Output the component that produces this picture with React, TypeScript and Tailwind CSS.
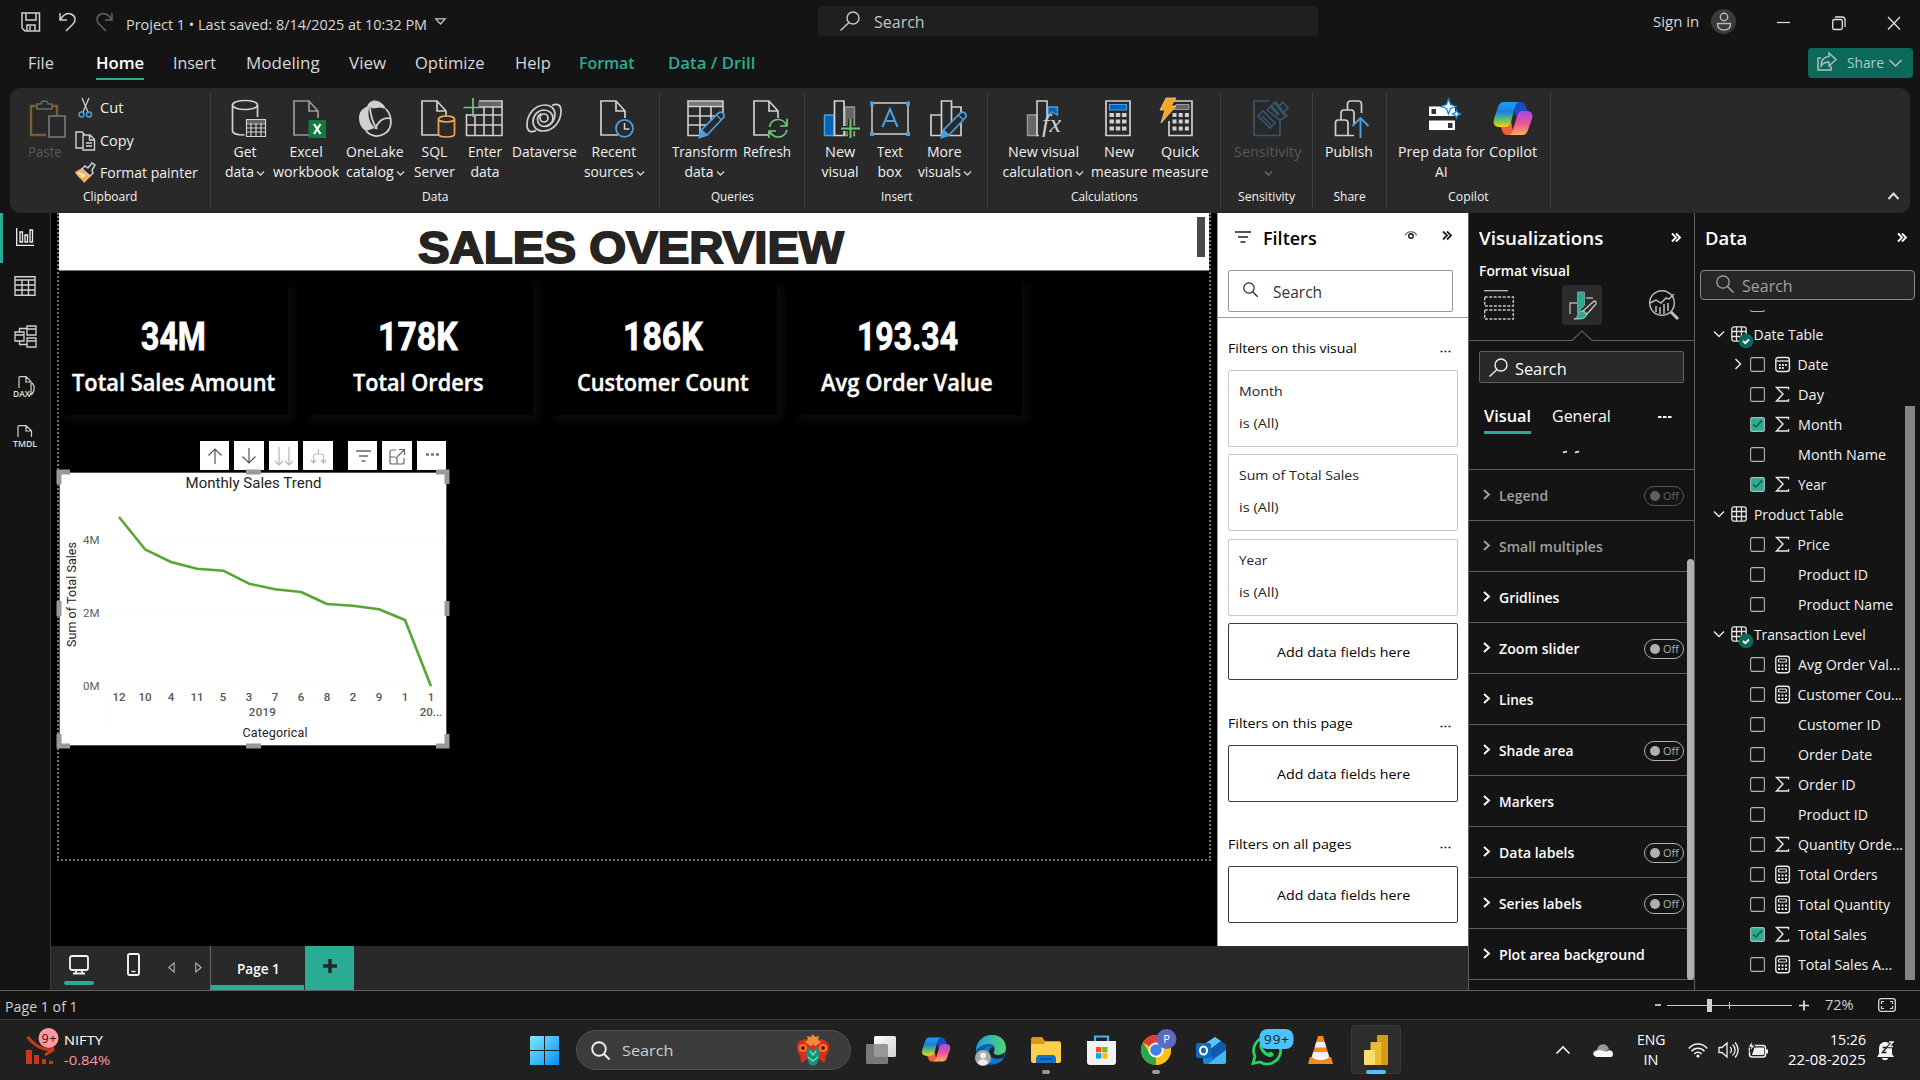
import { useLayoutEffect, useRef, useState } from "react";
import type { ReactNode } from "react";

/* Single line of text condensed or widened to a given width. */
function T({ w, c = "", children }: { w: number; c?: string; children: ReactNode }) {
  const ref = useRef<HTMLSpanElement>(null);
  const [k, setK] = useState(1);
  useLayoutEffect(() => {
    if (ref.current) setK(w / ref.current.offsetWidth);
  }, [w]);
  return (
    <span className={`block shrink-0 whitespace-nowrap ${c}`} style={{ width: w }}>
      <span ref={ref} className="inline-block origin-left" style={{ transform: `scaleX(${k})` }}>
        {children}
      </span>
    </span>
  );
}

function S({ w, h, c = "", children }: { w: number; h: number; c?: string; children: ReactNode }) {
  return (
    <svg width={w} height={h} viewBox={`0 0 ${w} ${h}`} fill="none" className={`block shrink-0 overflow-visible ${c}`}>
      {children}
    </svg>
  );
}

const G = "#d0d0d0";

const Doc = ({ x = 7, stroke = G }: { x?: number; stroke?: string }) => (
  <g transform={`translate(${x} 0)`} stroke={stroke} strokeWidth="1.7">
    <path d="M25 20V13L16 3H1v34h17" />
    <path d="M16 3v10h9" />
  </g>
);

const Pencil = ({ x }: { x: number }) => (
  <g transform={`translate(${x} 0)`}>
    <path d="M0 39.5l2-7.5L19 15c3-2.500 7 1.500 5 4.500L7.500 37z" fill="#292929" stroke="#4a9fe0" strokeWidth="1.7" />
    <path d="M2.500 32.500l5 4.500L0 39.500zM17 17l5 5" fill="#4a9fe0" stroke="#4a9fe0" strokeWidth="1.300" />
  </g>
);

const icons: Record<string, ReactNode> = {
  get: (
    <>
      <g stroke={G} strokeWidth="1.7">
        <ellipse cx="20" cy="7" rx="12.500" ry="4.500" />
        <path d="M7.500 7v26c0 2 4 4 12 4M32.500 7v12" />
        <path d="M21.500 21.500h19v17h-19zM21.500 26h19M21.500 30h19M21.500 34h19M26 25v14M31 25v14M36 25v14" fill="#292929" strokeWidth="1.200" />
      </g>
      <path d="M22 22h18v3H22z" fill="#666" />
    </>
  ),
  excel: (
    <>
      <Doc stroke="#9a9a9a" />
      <rect x="22.500" y="22" width="17.500" height="18" fill="#107c41" />
      <path d="M28 26l6.500 10M34.500 26L28 36" stroke="#fff" strokeWidth="2.200" />
    </>
  ),
  onelake: (
    <>
      <path d="M12 9C13 5 16 2.500 20 2.500S29 6 31 11l-6-1.500-7 1-3-2z" fill={G} />
      <path d="M13 8C6 11 4 15 4 20s2 10 7 13l9-3C14 25 12 16 14.500 8z" fill={G} />
      <g stroke={G} strokeWidth="1.800">
        <path d="M31 11c7 8 7 21-3 25.500S12 34 11 33M15 8c0 8 3 18 7 23M35.500 20.500c-8-2-13 4-15 10.500" />
      </g>
    </>
  ),
  sql: (
    <>
      <Doc x={6} />
      <path d="M23.500 21v15c0 4 16 4 16 0V21" fill="#292929" stroke="#f0a858" strokeWidth="1.700" />
      <ellipse cx="31.500" cy="21" rx="8" ry="3" fill="#292929" stroke="#f0a858" strokeWidth="1.700" />
    </>
  ),
  enter: (
    <>
      <path d="M13 4h24v5H13z" fill="#666" />
      <path d="M14 3h23v34.500H1.500V16M14 9h23M19 9v28M28 9v28M10 18v19M1.500 17H37M1.500 27H37" stroke={G} strokeWidth="1.600" />
      <path d="M8 0v19M-1.500 9.500h19" stroke="#6ccb77" strokeWidth="1.700" />
    </>
  ),
  dataverse: (
    <g stroke={G} strokeWidth="1.700">
      <path d="M28 7.500c6-3 9 0 9 5.500 0 11-8 20-18 20-6 0-10-4-10-9.500C9 17 14 12 20 12c5 0 9 3.500 9 8s-3.500 8.500-8.500 8.500c-4 0-7-3-7-7 0-3 2-5 4-6" />
      <path d="M12 32.500c-6 3-9 0-9-5.500C3 16 11 7 21 7c6 0 10 4 10 9.500 0 6-4 11-10 12" />
      <circle cx="20" cy="20" r="4" />
    </g>
  ),
  recent: (
    <>
      <Doc x={6} />
      <circle cx="30.500" cy="30.300" r="8.500" fill="#292929" stroke="#4a9fe0" strokeWidth="1.800" />
      <path d="M30.500 25v6h5" stroke={G} strokeWidth="1.500" />
    </>
  ),
  transform: (
    <>
      <path d="M3 3h35v5H3z" fill="#777" />
      <path d="M38 15V3H3v34.500h13M3 8.500h35M3 18h31M3 27h20M15 8.500v29M26 8.500V24" stroke={G} strokeWidth="1.600" />
      <Pencil x={14.500} />
    </>
  ),
  refresh: (
    <>
      <Doc x={6} />
      <path d="M21 21h20v19H21z" fill="#292929" />
      <path d="M22.500 29c1-5 4.500-7.500 8.500-7.500 4 0 7 2.500 8.500 6M40 20.500v7.500h-7M40 32c-1 4-4.500 7-9 7s-7-3-8.500-6M22 40v-7h7" stroke="#6ccb77" strokeWidth="1.700" />
    </>
  ),
  newvisual: (
    <>
      <path d="M4.500 17h9.500v20.500H4.500z" fill="#0364b8" stroke="#4a9fe0" strokeWidth="1.500" />
      <path d="M25 9h9.500v28.500H25z" fill="#666" stroke="#999" strokeWidth="1.300" />
      <path d="M14.500 3h9.500v34.500h-9.500z" fill="#292929" stroke={G} strokeWidth="1.700" />
      <path d="M30.500 21v19M21 30.500h19" stroke="#292929" strokeWidth="5" />
      <path d="M30.500 21v19M21 30.500h19" stroke="#6ccb77" strokeWidth="1.900" />
    </>
  ),
  textbox: (
    <>
      <path d="M2 5h36v31H2z" stroke={G} strokeWidth="1.500" />
      <path d="M0 3.500h4v4H0zM36 3.500h4v4h-4zM0 34h4v4H0zM36 34h4v4h-4z" fill="#4a9fe0" />
      <path d="M12.500 29L20 11l7.500 18M15 23h10" stroke="#4a9fe0" strokeWidth="2" />
    </>
  ),
  more: (
    <>
      <path d="M16 37.500H6V17h10M26.500 9H36v28.500H16.500V3h10v28" stroke={G} strokeWidth="1.700" />
      <Pencil x={16.500} />
    </>
  ),
  calc: (
    <>
      <path d="M4.500 17H14v20.500H4.500z" fill="#666" stroke="#999" strokeWidth="1.400" />
      <path d="M25 9h9.500v8l-6-3-3.500 6z" fill="#0364b8" stroke="#4a9fe0" strokeWidth="1.300" />
      <path d="M16 37.500h-2V3h10v15" stroke={G} strokeWidth="1.600" />
      <text x="19" y="34" fontFamily="Liberation Serif, serif" fontStyle="italic" fontSize="26" fill={G} textLength="19">fx</text>
    </>
  ),
  measure: (
    <>
      <path d="M7 3h24v34.500H7z" stroke={G} strokeWidth="1.700" />
      <path d="M10.500 6.500h17v5.500h-17z" fill="#0364b8" stroke="#4a9fe0" strokeWidth="1.200" />
      <path d="M10.500 17h17M10.500 23.500h17M10.500 30.500h17" stroke={G} strokeWidth="4.200" strokeDasharray="4.500 1.750" />
    </>
  ),
  quick: (
    <>
      <path d="M14 3h18v34.500H9V23" stroke={G} strokeWidth="1.700" />
      <path d="M16 6.500h13v5H14z" fill="#666" stroke="#999" />
      <path d="M12.500 17H29M12.500 23.500H29M12.500 30.500H29" stroke={G} strokeWidth="4.200" strokeDasharray="4 2.200" />
      <path d="M6 0h10l-5 8h5L1 25l4-13H0z" fill="#f5a623" stroke="#ffd080" strokeWidth=".8" />
    </>
  ),
  sensitivity: (
    <g stroke="#34556b" strokeWidth="1.700">
      <path d="M22 3H7v34.500h26V22M11 18l5-5 12 12-5 5z" />
      <path d="M15 18l9 9M20 12l8-8 4 4 4-4 5 6-4 4 3 4-7 4z" />
      <path d="M24 8l8 9M28 4l10 13" strokeWidth="3" />
    </g>
  ),
  publish: (
    <>
      <path d="M25 37.500H6.500V25c0-2 1-3 2.500-3h7c2 0 3 1 3 3v12.500M12 22v-7c0-2 1-3 3-3h7c2 0 3 1 3 3v12M18.500 12V6c0-2 1-3 3-3h8c2 0 3 1 3 3v9" stroke={G} strokeWidth="1.700" />
      <path d="M31.500 40V20M23.500 28l8-8 8 8" stroke="#4a9fe0" strokeWidth="1.900" />
    </>
  ),
  prep: (
    <>
      <path d="M7 8.500h26V18H7zM7 22.500h26V32H7z" fill="#fff" />
      <path d="M9.500 11h4.500v5H9.500zM26 25h4.500v5H26z" fill="#333" />
      <path d="M26.500 1l2 5.500 5.500 2-5.500 2-2 5.500-2-5.500-5.500-2 5.500-2zM34.500 12l1.300 2.700 2.700 1.300-2.700 1.300-1.300 2.700-1.300-2.700-2.700-1.300 2.700-1.300z" fill="#fff" stroke="#1689d8" strokeWidth="1.300" />
    </>
  ),
  copilot: <CopilotMark />,
};

function CopilotMark() {
  return (
    <>
      <defs>
        <linearGradient id="cpa" x1="0" y1="0" x2="0" y2="1">
          <stop offset="0" stopColor="#1ba0f0" />
          <stop offset=".4" stopColor="#1c7fe0" />
          <stop offset=".7" stopColor="#5fc06a" />
          <stop offset="1" stopColor="#f5d010" />
        </linearGradient>
        <linearGradient id="cpb" x1="0" y1="0" x2="0" y2="1">
          <stop offset="0" stopColor="#a04be8" />
          <stop offset=".5" stopColor="#ee5098" />
          <stop offset="1" stopColor="#ffae55" />
        </linearGradient>
      </defs>
      <path d="M19 4h9c3 0 4 2 5 5l2 5h-6c-3 0-5 2-6 5z" fill="#1b49c9" />
      <path d="M21 37h-7c-3 0-4-2-5-5l-2-4h5c4 0 5-2 6-5z" fill="#f0603a" />
      <path d="M11 4h16c-3 0-4 2-5 5l-4 15c-1 3-2 5-6 5H6c-5 0-6-4-5-8L5 9c1-3 3-5 6-5z" fill="url(#cpa)" />
      <path d="M29 37H15c3 0 4-2 5-5l4-14c1-3 2-5 6-5h4c5 0 6 4 5 8l-4 11c-1 3-3 5-6 5z" fill="url(#cpb)" />
    </>
  );
}

const Caret = ({ c = "#d0d0d0" }: { c?: string }) => (
  <S w={7} h={5} c="ml-[3px] mr-px mt-[3px]">
    <path d="M0 .5l3.500 3.500L7 .5" stroke={c} strokeWidth="1.400" />
  </S>
);

type ItemProps = { icon: string; box: string; a: string; aw: number; b?: string; bw?: number; caret?: boolean; dim?: boolean };

function Item({ icon, box, a, aw, b, bw, caret, dim }: ItemProps) {
  return (
    <div className={`flex shrink-0 flex-col items-center ${box} ${dim ? "text-[#585858]" : "text-[#f0f0f0]"}`}>
      <S w={40} h={40}>{icons[icon]}</S>
      <div className="mt-[4px] flex h-5 items-center justify-center text-[14px] leading-5">
        <T w={aw}>{a}</T>
      </div>
      <div className="flex h-5 items-center justify-center text-[14px] leading-5">
        {b && <T w={bw || 30}>{b}</T>}
        {caret && <Caret c={dim ? "#686868" : "#d0d0d0"} />}
      </div>
    </div>
  );
}

function Group({ box, name, nw, pad, children }: { box: string; name: string; nw: number; pad: string; children: ReactNode }) {
  return (
    <div className={`mt-[5px] flex h-[115px] shrink-0 flex-col border-r border-[#404040] ${box}`}>
      <div className={`mt-[5px] flex h-[89px] ${pad}`}>{children}</div>
      <div className="flex h-[20px] items-center justify-center text-[12px] text-[#f4f4f4]">
        <T w={nw}>{name}</T>
      </div>
    </div>
  );
}

function TitleBar() {
  return (
    <div className="flex h-[44px] items-center text-[#d8d8d8]">
      <S w={20} h={20} c="ml-[21px]">
        <path d="M1 1h17.500v18H4l-3-3zM5 1v7h10V1M6 19v-6h8v6M9 14v4" stroke="#d0d0d0" strokeWidth="1.500" />
      </S>
      <S w={17} h={20} c="ml-[18px]">
        <path d="M1 1v7h7M1 8C4 3 8 .5 12 2c5 2 5 7 2 10l-7 7" stroke="#d0d0d0" strokeWidth="1.500" />
      </S>
      <S w={17} h={20} c="ml-[20px]">
        <path d="M16 1v7H9M16 8C13 3 9 .5 5 2 0 4 0 9 3 12l7 7" stroke="#606060" strokeWidth="1.500" />
      </S>
      <T w={301} c="ml-[13px] mt-[4px] text-[14px]">Project 1 • Last saved: 8/14/2025 at 10:32 PM</T>
      <S w={11} h={7} c="ml-[8px] mt-[-2px]">
        <path d="M.8.800h9.400L5.500 6z" stroke="#c8c8c8" strokeWidth="1.200" />
      </S>
      <div className="mt-[-2px] ml-[372px] flex h-[30px] w-[500px] items-center rounded-[2px] bg-[#1f1f1f]">
        <S w={20} h={20} c="ml-[22px]">
          <circle cx="13" cy="7" r="6" stroke="#c8c8c8" strokeWidth="1.400" />
          <path d="M9 11.500L.5 19.500" stroke="#c8c8c8" strokeWidth="1.400" />
        </S>
        <T w={51} c="ml-[14px] mt-px text-[16px] text-[#c4c4c4]">Search</T>
      </div>
      <T w={46} c="ml-[335px] mt-[-1px] text-[14px]">Sign in</T>
      <div className="ml-[12px] mt-[-1px] flex size-[25px] items-center justify-center rounded-full bg-[#3a3a3a]">
        <S w={14} h={19}>
          <circle cx="7" cy="5" r="3.700" stroke="#b8b8b8" strokeWidth="1.400" />
          <path d="M.5 11.500h13c0 4.500-2.500 6.500-6.500 6.500s-6.500-2-6.500-6.500z" stroke="#b8b8b8" strokeWidth="1.400" />
        </S>
      </div>
      <S w={13} h={14} c="ml-[41px]"><path d="M0 7.500h13" stroke="#e0e0e0" strokeWidth="1.200" /></S>
      <S w={14} h={14} c="ml-[42px] mt-px">
        <rect x=".7" y="3.500" width="9.600" height="10" rx="1.800" stroke="#e0e0e0" strokeWidth="1.300" />
        <path d="M3 1h7c2 0 3 1 3 3v7" stroke="#e0e0e0" strokeWidth="1.300" />
      </S>
      <S w={14} h={14} c="ml-[41px] mt-px"><path d="M1 1l12 12.500M13 1L1 13.500" stroke="#e0e0e0" strokeWidth="1.300" /></S>
    </div>
  );
}

function MenuBar() {
  return (
    <div className="flex h-[44px] items-start text-[17px] leading-[38px] text-[#d8d8d8]">
      <T w={26} c="ml-[28px]">File</T>
      <div className="ml-[42px] h-[36px] border-b-2 border-[#2aac94] font-semibold text-white"><T w={48}>Home</T></div>
      <T w={43} c="ml-[29px]">Insert</T>
      <T w={74} c="ml-[30px]">Modeling</T>
      <T w={37} c="ml-[29px]">View</T>
      <T w={70} c="ml-[29px]">Optimize</T>
      <T w={36} c="ml-[30px]">Help</T>
      <T w={56} c="ml-[28px] font-semibold text-[#2aac94]">Format</T>
      <T w={87} c="ml-[33px] font-semibold text-[#2aac94]">Data / Drill</T>
      <div className="ml-[1053px] mt-[4px] flex h-[30px] w-[105px] items-center rounded-[4px] bg-[#0c695a] leading-[28px] text-[#b4c8c4]">
        <S w={20} h={19} c="ml-[9px] mt-[-3px]">
          <path d="M4 6H1v12h13v-4" stroke="#a8c4be" strokeWidth="1.500" />
          <path d="M12 1l7 6.500-7 6.500v-4c-4 0-6 1-8 4 0-6 3-9 8-9.500z" stroke="#a8c4be" strokeWidth="1.400" />
        </S>
        <T w={37} c="ml-[10px] mt-[-1px] text-[14.500px]">Share</T>
        <S w={13} h={8} c="ml-[5px]"><path d="M.5 1L6.500 7l6-6" stroke="#a8c4be" strokeWidth="1.500" /></S>
      </div>
    </div>
  );
}

function Ribbon() {
  return (
    <div className="mx-[10px] flex h-[125px] w-[1900px] rounded-[10px] bg-[#292929]">
      <Group box="w-[201px]" name="Clipboard" nw={54} pad="pl-[14px]">
        <div className="flex w-[42px] flex-col items-center text-[#585858]">
          <S w={40} h={40}>
            <path d="M15 8H6v29h15M25 8h7v10" stroke="#7d5c2e" strokeWidth="2.500" />
            <path d="M12 11V6h4c0-4 7-4 7 0h4v5z" fill="#292929" stroke="#6a6a6a" strokeWidth="1.500" />
            <path d="M24 18h16v21H24z" fill="#292929" stroke="#7a7a7a" strokeWidth="1.600" />
          </S>
          <div className="mt-[4px] text-[14px] leading-5"><T w={34}>Paste</T></div>
        </div>
        <div className="ml-[9px] mt-[-1px] flex flex-col text-[14px] text-[#f0f0f0]">
          <div className="flex h-[21px] items-center">
            <S w={20} h={20}>
              <path d="M7 0l6 14M14 0L8 14" stroke="#d0d0d0" strokeWidth="1.300" />
              <circle cx="6.500" cy="16.500" r="2.500" stroke="#4a9fe0" strokeWidth="1.500" /><circle cx="14" cy="16.500" r="2.500" stroke="#4a9fe0" strokeWidth="1.500" />
            </S>
            <T w={23} c="ml-[5px]">Cut</T>
          </div>
          <div className="mt-[12px] flex h-[21px] items-center">
            <S w={20} h={20}>
              <path d="M8 17H1V1h6l3 3M8 4h7l4.500 4.500V19H8zM14.500 4v5H19M11 12h6M11 15h6" stroke="#d0d0d0" strokeWidth="1.400" />
            </S>
            <T w={34} c="ml-[5px]">Copy</T>
          </div>
          <div className="mt-[11px] flex h-[21px] items-center">
            <S w={20} h={20}>
              <path d="M0 9l7-4 9 8-7 7C7 16 2 14 0 9z" fill="#f4b45c" />
              <path d="M3 10l5 2M6 14l4-2" stroke="#fff2d8" strokeWidth="1.500" />
              <path d="M7 6l3-3 3 2 4-5 3 2-3 5 1 3-3 3z" fill="#292929" stroke="#d0d0d0" strokeWidth="1.500" />
            </S>
            <T w={98} c="ml-[5px]">Format painter</T>
          </div>
        </div>
      </Group>
      <Group box="w-[449px]" name="Data" nw={26} pad="pl-[6px]">
        <Item icon="get" box="w-[56px]" a="Get" aw={23} b="data" bw={29} caret />
        <Item icon="excel" box="w-[66px]" a="Excel" aw={33} b="workbook" bw={66} />
        <Item icon="onelake" box="w-[72px]" a="OneLake" aw={58} b="catalog" bw={48} caret />
        <Item icon="sql" box="w-[47px]" a="SQL" aw={26} b="Server" bw={41} />
        <Item icon="enter" box="w-[54px]" a="Enter" aw={34} b="data" bw={29} />
        <Item icon="dataverse" box="w-[64px]" a="Dataverse" aw={65} />
        <Item icon="recent" box="w-[76px]" a="Recent" aw={45} b="sources" bw={50} caret />
      </Group>
      <Group box="w-[145px]" name="Queries" nw={43} pad="pl-[9px]">
        <Item icon="transform" box="w-[71px]" a="Transform" aw={65} b="data" bw={29} caret />
        <Item icon="refresh" box="w-[53px]" a="Refresh" aw={48} />
      </Group>
      <Group box="w-[183px]" name="Insert" nw={31} pad="pl-[10px]">
        <Item icon="newvisual" box="w-[50px]" a="New" aw={30} b="visual" bw={37} />
        <Item icon="textbox" box="w-[49px]" a="Text" aw={26} b="box" bw={24} />
        <Item icon="more" box="w-[61px]" a="More" aw={35} b="visuals" bw={43} caret />
      </Group>
      <Group box="w-[233px]" name="Calculations" nw={67} pad="pl-[11px]">
        <Item icon="calc" box="w-[88px]" a="New visual" aw={71} b="calculation" bw={70} caret />
        <Item icon="measure" box="w-[64px]" a="New" aw={30} b="measure" bw={56} />
        <Item icon="quick" box="w-[58px]" a="Quick" aw={38} b="measure" bw={56} />
      </Group>
      <Group box="w-[92px]" name="Sensitivity" nw={57} pad="pl-[11px]">
        <Item icon="sensitivity" box="w-[70px]" a="Sensitivity" aw={67} caret dim />
      </Group>
      <Group box="w-[74px]" name="Share" nw={32} pad="pl-[10px]">
        <Item icon="publish" box="w-[52px]" a="Publish" aw={48} />
      </Group>
      <Group box="w-[164px]" name="Copilot" nw={41} pad="pl-[10px]">
        <Item icon="prep" box="w-[89px]" a="Prep data for" aw={87} b="AI" bw={13} />
        <Item icon="copilot" box="w-[54px]" a="Copilot" aw={48} />
      </Group>
      <div className="flex flex-1 items-end justify-end pb-[13px] pr-[11px]">
        <S w={11} h={8}><path d="M.5 7L5.500 1.500l5 5.500" stroke="#e0e0e0" strokeWidth="1.900" /></S>
      </div>
    </div>
  );
}

function Rail() {
  return (
    <div className="flex w-[51px] shrink-0 border-r border-[#3d3d3d]">
      <div className="h-[50px] w-[3px] bg-[#2aac94]" />
      <div className="flex w-[44px] flex-col items-center">
        <S w={18} h={18} c="mt-[15px]">
          <path d="M.7 0v17.300H18M4 4h2.500v10H4zM9 7h2.500v7H9zM14 2h2.500v12H14z" stroke="#f0f0f0" strokeWidth="1.300" />
        </S>
        <S w={22} h={20} c="mt-[30px]">
          <path d="M1 .700h20v18.600H1zM1 4h20M1 9h20M1 14h20M8 4v15M14.500 4v15" stroke="#d0d0d0" strokeWidth="1.400" />
        </S>
        <S w={23} h={23} c="mt-[29px]">
          <path d="M13 1h9v9h-9zM13 4h9M13 13h9v9h-9zM13 16h9M1 7h9v9H1zM1 10h9M5.500 7V3.500H13M5.500 16v3.500H13" stroke="#d0d0d0" strokeWidth="1.300" />
        </S>
        <S w={22} h={21} c="mt-[28px]">
          <path d="M5 12V1.500C5 1 5.500.7 6 .7h6l5 5V17c0 1-1 2-2 3M12 .7V6h5M18 7c3 2 3 9-1 12" stroke="#d0d0d0" strokeWidth="1.200" />
          <path d="M0 13h15v8H0z" fill="#141414" />
          <text x="-1" y="20.500" fontSize="9" fontWeight="600" fill="#e0e0e0" textLength="17" lengthAdjust="spacingAndGlyphs">DAX</text>
        </S>
        <S w={24} h={22} c="mt-[28px]">
          <path d="M5 12V1.500C5 1 5.500.7 6 .7h7l5.500 5V12M13 .7V6h5.500" stroke="#d0d0d0" strokeWidth="1.200" />
          <text x="0" y="21.500" fontSize="9.500" fontWeight="600" fill="#e0e0e0" textLength="24" lengthAdjust="spacingAndGlyphs">TMDL</text>
        </S>
      </div>
    </div>
  );
}

const kpis = [
  { v: "34M", vw: 65, l: "Total Sales Amount", lw: 203 },
  { v: "178K", vw: 80, l: "Total Orders", lw: 131 },
  { v: "186K", vw: 80, l: "Customer Count", lw: 172 },
  { v: "193.34", vw: 101, l: "Avg Order Value", lw: 172 },
];

const months = ["12", "10", "4", "11", "5", "3", "7", "6", "8", "2", "9", "1", "1"];
const linePoints = "60,45 86,77.300 112,90 138,96.700 164.300,98.700 190,111.700 216,117.300 242,120 268,132 294,133.700 320,137.300 346,148 372,214.300";

function Chart() {
  return (
    <S w={388} h={274} c="bg-white font-['Roboto',sans-serif]">
      <rect x=".5" y=".5" width="387" height="273" stroke="#555" />
      <text x="126.500" y="16" fontSize="15" fill="#252423" textLength="136">Monthly Sales Trend</text>
      {[68, 141, 214].map((y, i) => (
        <g key={y}>
          <path d={`M48 ${y + 0.5}H385`} stroke="#ededed" strokeDasharray="1 4" />
          <text x="40.500" y={y + 4} fontSize="11.500" fill="#605e5c" textAnchor="end">{["4M", "2M", "0M"][i]}</text>
        </g>
      ))}
      <path d="M47.500 218v32M359.500 218v32" stroke="#e8e8e8" strokeDasharray="1 4" />
      <polyline points={linePoints} stroke="#56a633" strokeWidth="2.600" strokeLinejoin="round" />
      {months.map((m, i) => (
        <text key={i} x={60 + i * 26} y="229" fontSize="11.500" fontWeight="500" fill="#555" textAnchor="middle">{m}</text>
      ))}
      <text x="203.500" y="244" fontSize="11.500" fontWeight="500" fill="#555" textAnchor="middle" letterSpacing=".3">2019</text>
      <text x="372" y="244" fontSize="11.500" fontWeight="500" fill="#555" textAnchor="middle">20...</text>
      <text x="183.500" y="265" fontSize="12.500" fill="#252423" textLength="65">Categorical</text>
      <text transform="translate(17 175) rotate(-90)" fontSize="12.500" fill="#252423" textLength="105">Sum of Total Sales</text>
      <path d="M0 12V0h11M377 0h11v12M388 262v12h-11M11 274H0v-12M187 0h15M187 274h15M0 129v15M388 129v15" stroke="#999" strokeWidth="5" />
    </S>
  );
}

function Tool({ gap = "", w = "w-[29px]", children }: { gap?: string; w?: string; children: ReactNode }) {
  return <div className={`flex h-[29px] items-center justify-center bg-white pt-px ${w} ${gap}`}><S w={18} h={18}>{children}</S></div>;
}

function Canvas() {
  return (
    <div className="w-[1166px] shrink-0 overflow-hidden bg-black pl-[6px]">
      <div className="flex h-[648px] w-[1154px] flex-col border-2 border-t-0 border-dotted border-[#777]">
        <div className="flex h-[58px] shrink-0 justify-between border-b border-[#777] bg-white">
          <T w={426} c="ml-[359px] mt-[11px] font-['Liberation_Sans',sans-serif] text-[43.500px] font-bold leading-[48px] text-[#252423] [-webkit-text-stroke:1.8px_#252423]">SALES OVERVIEW</T>
          <div className="mr-[4px] mt-[4px] h-[40px] w-[8px] bg-[#4a4a4a]" />
        </div>
        <div className="mt-[9px] flex gap-[14.500px]">
          {kpis.map((k) => (
            <div key={k.l} className="flex h-[135px] w-[229px] shrink-0 flex-col items-center bg-black text-white shadow-[6px_6px_10px_1px_#0b0b0b] mr-px last:mr-0">
              <T w={k.vw} c="mt-[35px] font-['Roboto',sans-serif] text-[38px] font-bold leading-[44px] [-webkit-text-stroke:0.8px_#fff]">{k.v}</T>
              <T w={k.lw} c="mt-[7px] text-[23px] font-semibold leading-[32px] [-webkit-text-stroke:0.4px_#fff]">{k.l}</T>
            </div>
          ))}
        </div>
        <div className="mt-[26px] flex gap-[5px] pl-[141px]">
          <Tool><path d="M9 17V2M2.500 8.500L9 2l6.500 6.500" stroke="#555" strokeWidth="1.200" /></Tool>
          <Tool w="w-[30px]"><path d="M9 1v15M2.500 9.500L9 16l6.500-6.500" stroke="#555" strokeWidth="1.200" /></Tool>
          <Tool><path d="M4 0v18M0 14l4 4 4-4M14 0v18M10 14l4 4 4-4" stroke="#bbb" strokeWidth="1.300" /></Tool>
          <Tool w="w-[30px]"><path d="M9.500 2v5M4.500 16V9c0-1.500 1-2 2-2h6c1 0 2 .500 2 2v7M2 13l2.500 3L7 13M12 13l2.500 3 2.500-3" stroke="#bbb" strokeWidth="1.200" /></Tool>
          <Tool gap="ml-[10px]"><path d="M2 4h15M5 9h9M7.500 14h4" stroke="#666" strokeWidth="1.300" /></Tool>
          <Tool w="w-[30px]"><path d="M8 3H4C3 3 2 4 2 5v10c0 1 1 2 2 2h10c1 0 2-1 2-2v-4M2 10h4c2 0 3 1 3 2v5M9 10l7.500-7.500M11 2.500h5.500V8" stroke="#666" strokeWidth="1.200" /></Tool>
          <Tool><path d="M3 7.500h3M8 7.500h3M13 7.500h3" stroke="#777" strokeWidth="2.500" /></Tool>
        </div>
        <div className="mt-[2px]"><Chart /></div>
      </div>
    </div>
  );
}

function More() {
  return <S w={11} h={3} c="mr-[17px] mt-[5px]"><path d="M.5 1.500h2M4.500 1.500h2M8.500 1.500h2" stroke="#222" strokeWidth="1.600" /></S>;
}

function Section({ name, w, gap }: { name: string; w: number; gap: string }) {
  return (
    <div className={`flex h-[20px] items-center justify-between text-black ${gap}`}>
      <T w={w} c="mt-[-1px] text-[13.500px]">{name}</T>
      <More />
    </div>
  );
}

const AddBox = ({ gap }: { gap: string }) => (
  <div className={`flex h-[57px] w-[230px] items-center justify-center rounded-[2px] border border-[#3c3c3c] pt-px text-black ${gap}`}>
    <T w={133} c="text-[13.500px]">Add data fields here</T>
  </div>
);

const Collapse = ({ color }: { color: string }) => (
  <S w={10} h={9}><path d="M1 .5l4 4-4 4M5 .5l4 4-4 4" stroke={color} strokeWidth="1.800" /></S>
);

function Filters() {
  const cards = [
    { n: "Month", w: 44, g: "mt-[11px] h-[77px]" },
    { n: "Sum of Total Sales", w: 120, g: "mt-[7px] h-[77px]" },
    { n: "Year", w: 28, g: "mt-[8px] h-[77px]" },
  ];
  return (
    <div className="w-[251px] shrink-0 border-l border-[#999] bg-white text-black">
      <div className="flex h-[57px] items-center pb-[8px]">
        <S w={16} h={12} c="ml-[17px] mt-[-2px]"><path d="M0 1h16M3 6h10M5.500 11h5" stroke="#222" strokeWidth="1.500" /></S>
        <T w={54} c="ml-[12px] mt-[2px] text-[18px] font-semibold">Filters</T>
        <S w={12} h={9} c="ml-[88px] mt-[-4px]"><path d="M.5 4.500C2-.5 10-.5 11.500 4.500" stroke="#555" strokeWidth="1.200" /><circle cx="6" cy="5" r="2.200" stroke="#111" strokeWidth="1.400" /></S>
        <div className="ml-[25px] mt-[-5px]"><Collapse color="#222" /></div>
      </div>
      <div className="ml-[10px] flex h-[42px] w-[225px] items-center rounded-[2px] border border-[#999]">
        <S w={15} h={15} c="ml-[14px] mt-[-3px]"><circle cx="6" cy="6" r="5.200" stroke="#222" strokeWidth="1.200" /><path d="M9.700 9.700l5 5" stroke="#222" strokeWidth="1.300" /></S>
        <T w={49} c="ml-[15px] mt-[3px] text-[15.500px] text-[#333]">Search</T>
      </div>
      <div className="mt-[5px] border-t border-[#999] pl-[10px]">
        <Section name="Filters on this visual" w={129} gap="mt-[21px]" />
        {cards.map((c) => (
          <div key={c.n} className={`w-[230px] rounded-[2px] border border-[#c8c8c8] pl-[10px] text-[13.500px] text-[#252423] ${c.g}`}>
            <T w={c.w} c="mt-[10px] leading-5">{c.n}</T>
            <T w={40} c="mt-[12px] leading-5">is (All)</T>
          </div>
        ))}
        <AddBox gap="mt-[7px]" />
        <Section name="Filters on this page" w={125} gap="mt-[34px]" />
        <AddBox gap="mt-[11px]" />
        <Section name="Filters on all pages" w={123} gap="mt-[33px]" />
        <AddBox gap="mt-[11px]" />
      </div>
    </div>
  );
}

function PageTabs() {
  return (
    <div className="flex h-[44px] bg-[#292929]">
      <div className="ml-[13px] flex w-[30px] flex-col items-center">
        <S w={20} h={20} c="mt-[9px] ml-[-1px]"><rect x="1" y="1" width="18" height="14" rx="2" stroke="#f4f4f4" strokeWidth="1.800" /><path d="M4 18.500h12M7 15v3M13 15v3" stroke="#f4f4f4" strokeWidth="1.800" /></S>
        <div className="mt-[6px] h-[4px] w-[30px] rounded-full bg-[#2aac94]" />
      </div>
      <S w={13} h={23} c="ml-[33px] mt-[7px]"><rect x="1" y="1" width="11" height="21" rx="1.500" stroke="#f4f4f4" strokeWidth="1.900" /><path d="M4.500 18.500h4" stroke="#f4f4f4" strokeWidth="1.400" /></S>
      <S w={7} h={11} c="ml-[28px] mt-[16px]"><path d="M6.200 1v9L.8 5.500z" stroke="#b0b0b0" strokeWidth="1.100" /></S>
      <S w={7} h={11} c="ml-[20px] mt-[16px]"><path d="M.8 1v9l5.400-4.500z" stroke="#b0b0b0" strokeWidth="1.100" /></S>
      <div className="ml-[8px] flex w-[94px] justify-center border-b-[5px] border-l border-b-[#2aac94] border-l-[#666] pl-px pt-[13px] text-[14.500px] font-semibold leading-5 text-white">
        <T w={43}>Page 1</T>
      </div>
      <div className="ml-px flex w-[49px] justify-center bg-[#2aac94] pt-[13px]"><S w={14} h={14}><path d="M7 0v14M0 7h14" stroke="#252525" strokeWidth="3.600" /></S></div>
    </div>
  );
}

const formatRows = [
  { n: "Legend", w: 49, t: true, d: true },
  { n: "Small multiples", w: 104, d: true },
  { n: "Gridlines", w: 60 },
  { n: "Zoom slider", w: 81, t: true },
  { n: "Lines", w: 34 },
  { n: "Shade area", w: 74, t: true },
  { n: "Markers", w: 55 },
  { n: "Data labels", w: 75, t: true },
  { n: "Series labels", w: 83, t: true },
  { n: "Plot area background", w: 146 },
];

function Visualizations() {
  return (
    <div className="w-[227px] shrink-0 border-x border-[#606060] text-white">
      <div className="flex h-[48px] items-center pl-[10px]">
        <T w={124} c="mt-[2px] text-[18px] font-semibold">Visualizations</T>
        <div className="ml-[68px]"><Collapse color="#fff" /></div>
      </div>
      <T w={91} c="ml-[10px] text-[14px] font-semibold leading-[20px]">Format visual</T>
      <div className="mt-[4px] flex h-[40px] items-center">
        <S w={30} h={30} c="ml-[15px]">
          <path d="M0 .700h24" stroke="#bbb" strokeWidth="1.300" />
          <path d="M.7 7h28.600v9H.700zM.7 20h28.600v9H.700z" stroke="#c4c4c4" strokeWidth="1.400" strokeDasharray="3 1.500" />
        </S>
        <div className="ml-[48px] flex size-[40px] items-center justify-center rounded-[3px] bg-[#2b2b2b]">
          <S w={26} h={29}>
            <path d="M1 23V12h7M17 7h7" stroke="#b0b0b0" strokeWidth="1.400" />
            <path d="M8.500 1h7v13l-7 8z" fill="#2aac94" stroke="#8ab" strokeWidth=".8" />
            <path d="M26 10c2 1 1 3 0 4l-8 9-4-3L24 11c1-1 1-1 2-1z" fill="#2b2b2b" stroke="#c8c8c8" strokeWidth="1.300" />
            <path d="M13 20c3 0 5 2 4 5-1 3-6 3-12 3 4-1 3-3 4-5s2-3 4-3z" fill="#2aac94" stroke="#c8c8c8" />
          </S>
        </div>
        <S w={30} h={30} c="ml-[47px]">
          <circle cx="13" cy="13" r="12.300" stroke="#c0c0c0" strokeWidth="1.400" />
          <path d="M1 13l6-3 5 3 5-5 3 1 5-5" stroke="#c0c0c0" strokeWidth="1.400" />
          <path d="M7 22v-6M11 24v-7M15 24V14M19 21v-8" stroke="#c0c0c0" strokeWidth="1.500" />
          <path d="M22 22l7 7" stroke="#c0c0c0" strokeWidth="3" />
        </S>
      </div>
      <S w={225} h={11} c="mt-[5px]"><path d="M0 10.500h103l10-9.500 10 9.500h102" stroke="#606060" strokeWidth="1.200" /></S>
      <div className="ml-[10px] mt-[10px] flex h-[32px] w-[205px] items-center rounded-[2px] border border-[#606060] bg-[#292929]">
        <S w={19} h={19} c="ml-[9px]"><circle cx="12" cy="7" r="6" stroke="#f0f0f0" strokeWidth="1.400" /><path d="M8 11.500L.5 18.500" stroke="#f0f0f0" strokeWidth="1.400" /></S>
        <T w={52} c="ml-[7px] mt-[3px] text-[16px]">Search</T>
      </div>
      <div className="flex h-[86px] pl-[15px] pt-[20px] text-[16px]">
        <div className="h-[31px] border-b-[3px] border-[#2aac94] font-semibold leading-[26px]"><T w={47}>Visual</T></div>
        <T w={59} c="ml-[21px] leading-[26px]">General</T>
        <S w={14} h={4} c="ml-[47px] mt-[12px]"><path d="M0 2h3.500M5 2h3.500M10 2h3.500" stroke="#fff" strokeWidth="2" /></S>
      </div>
      <div className="flex h-[521px]">
        <div className="mt-[-18px] w-[218px]">
          <S w={218} h={18}><path d="M94 1.500l4-1M106 1.500l4-1" stroke="#fff" strokeWidth="1.500" /></S>
          {formatRows.map((r) => (
            <div key={r.n} className={`flex h-[51px] items-center border-t border-[#606060] ${r.d ? "w-[225px] text-[#a0a0a0]" : "text-white"}`}>
              <S w={7} h={11} c="ml-[14px] mt-[-1px]"><path d="M1 1l5 4.500L1 10" stroke="currentColor" strokeWidth="1.900" /></S>
              <T w={r.w} c="ml-[9px] mt-[1px] text-[14px] font-semibold">{r.n}</T>
              {r.t && (
                <div className={`ml-auto mt-[2px] flex h-[20px] w-[40px] items-center rounded-full border ${r.d ? "mr-[10px] border-[#555] text-[#606060]" : "mr-[3px] border-[#b0b0b0] text-[#b0b0b0]"}`}>
                  <div className="ml-[5px] size-[10px] rounded-full bg-current" />
                  <T w={16} c="ml-[3px] text-[11px]">Off</T>
                </div>
              )}
            </div>
          ))}
          <div className="h-[11px] w-[225px] border-t border-[#606060]" />
        </div>
        <div className="mt-[90px] h-[421px] w-[7px] rounded-full bg-[#b0b0b0]" />
      </div>
    </div>
  );
}

type Field = { n: string; w: number; k?: "sum" | "calc" | "date"; on?: boolean; table?: boolean; mark?: boolean };
const fields: Field[] = [
  { n: "Date Table", w: 70, table: true, mark: true },
  { n: "Date", w: 31, k: "date" },
  { n: "Day", w: 26, k: "sum" },
  { n: "Month", w: 44, k: "sum", on: true },
  { n: "Month Name", w: 88 },
  { n: "Year", w: 28, k: "sum", on: true },
  { n: "Product Table", w: 90, table: true },
  { n: "Price", w: 32, k: "sum" },
  { n: "Product ID", w: 70 },
  { n: "Product Name", w: 95 },
  { n: "Transaction Level", w: 112, table: true, mark: true },
  { n: "Avg Order Val...", w: 102, k: "calc" },
  { n: "Customer Cou...", w: 105, k: "calc" },
  { n: "Customer ID", w: 83 },
  { n: "Order Date", w: 74 },
  { n: "Order ID", w: 57, k: "sum" },
  { n: "Product ID", w: 70 },
  { n: "Quantity Orde...", w: 105, k: "sum" },
  { n: "Total Orders", w: 80, k: "calc" },
  { n: "Total Quantity", w: 92, k: "calc" },
  { n: "Total Sales", w: 69, k: "sum", on: true },
  { n: "Total Sales A...", w: 94, k: "calc" },
];

function FieldRow({ f }: { f: Field }) {
  if (f.table)
    return (
      <div className="flex h-[30px] items-center">
        <S w={10} h={6} c="ml-[19px] mt-[-1px]"><path d="M0 .5l5 5 5-5" stroke="#e4e4e4" strokeWidth="1.500" /></S>
        <S w={16} h={16} c="ml-[7px]">
          <rect x=".8" y=".8" width="14.400" height="14.400" rx="2.500" stroke="#e4e4e4" strokeWidth="1.300" />
          <path d="M5.500 1v14M10.500 1v14M1 5.500h14M1 10.500h14" stroke="#e4e4e4" strokeWidth="1.300" />
          {f.mark && <><circle cx="15" cy="15" r="7.300" fill="#0c695a" /><path d="M12 15l2.300 2.200L18 13.500" stroke="#fff" strokeWidth="1.800" /></>}
        </S>
        <T w={f.w} c="ml-[6.500px] text-[14px]">{f.n}</T>
      </div>
    );
  return (
    <div className="flex h-[30px] items-center">
      <S w={6} h={10} c="ml-[40px]">{f.k === "date" && <path d="M.5 0l5 5-5 5" stroke="#e4e4e4" strokeWidth="1.500" />}</S>
      <S w={15} h={15} c="ml-[9px]">
        <rect x=".6" y=".6" width="13.800" height="13.800" rx="1.500" stroke="#b4b4b4" strokeWidth="1.100" fill={f.on ? "#2aac94" : "none"} />
        {f.on && <path d="M3 7.500l3 2.500 6-6.500" stroke="#124a40" strokeWidth="1.200" />}
      </S>
      <S w={15} h={17} c="ml-[10px]">
        {f.k === "sum" && <path d="M13.500 3.500V1.500H1.500L8 8l-6.500 7h12v-2" stroke="#e8e8e8" strokeWidth="1.400" />}
        {f.k === "date" && <><rect x=".8" y="1.500" width="13.600" height="14" rx="2.500" stroke="#e8e8e8" strokeWidth="1.400" /><path d="M1 5h13" stroke="#e8e8e8" strokeWidth="1.300" /><path d="M4 9h8M4 12h5" stroke="#e8e8e8" strokeWidth="1.800" strokeDasharray="1.800 1.200" /></>}
        {f.k === "calc" && <><rect x=".8" y=".2" width="13.600" height="16.500" rx="2.500" stroke="#e8e8e8" strokeWidth="1.400" /><rect x="3.500" y="3" width="8" height="3" rx="1" stroke="#e8e8e8" strokeWidth="1.200" /><path d="M3 9.500h10M3 13h10" stroke="#e8e8e8" strokeWidth="2" strokeDasharray="2 1.500" /></>}
      </S>
      <T w={f.w} c="ml-[7.500px] text-[14px]">{f.n}</T>
    </div>
  );
}

function DataPane() {
  return (
    <div className="flex w-[225px] shrink-0 flex-col text-[#f2f2f2]">
      <div className="flex h-[48px] items-center pl-[10px] text-white">
        <T w={42} c="mt-[2px] text-[18px] font-semibold">Data</T>
        <div className="ml-[150px]"><Collapse color="#fff" /></div>
      </div>
      <div className="ml-[5px] mt-[9px] flex h-[30px] w-[215px] items-center rounded-[4px] border border-[#888] bg-[#262626]">
        <S w={18} h={18} c="ml-[15px] mt-[-2px]"><circle cx="7" cy="7" r="6.200" stroke="#a8a8a8" strokeWidth="1.300" /><path d="M11.500 11.500l6 6" stroke="#a8a8a8" strokeWidth="1.400" /></S>
        <T w={51} c="ml-[8px] mt-[1px] text-[16px] text-[#a0a0a0]">Search</T>
      </div>
      <div className="flex flex-1">
        <div className="w-[210px]">
          <S w={70} h={19}><path d="M55.500 10c0 1 1 1.500 2 1.500h10c1 0 2-.5 2-1.500" stroke="#b4b4b4" strokeWidth="1.200" /></S>
          {fields.map((f, i) => <FieldRow key={i} f={f} />)}
        </div>
        <div className="mt-[106px] h-[574px] w-[10px] bg-[#868482]" />
      </div>
    </div>
  );
}

function StatusBar() {
  return (
    <div className="flex h-[30px] items-center border-b border-t border-b-[#3c3c3c] border-t-[#606060] text-[14px] text-[#d0d0d0]">
      <T w={73} c="ml-[5px] mt-[2px]">Page 1 of 1</T>
      <S w={155} h={14} c="ml-[1577px]">
        <path d="M0 7h6" stroke="#d8d8d8" strokeWidth="1.700" />
        <path d="M12 7.500h125" stroke="#c8c8c8" />
        <path d="M74.500 4v7" stroke="#c8c8c8" />
        <rect x="52" y="1" width="5" height="13" fill="#d0d0d0" />
        <path d="M144 7.500h10M149 2.500v10" stroke="#e0e0e0" strokeWidth="1.700" />
      </S>
      <T w={29} c="ml-[15px] mt-[-1px]">72%</T>
      <S w={18} h={14} c="ml-[24px]">
        <rect x=".7" y=".7" width="16.600" height="12.600" rx="2.500" stroke="#d8d8d8" strokeWidth="1.300" />
        <path d="M6 3.500H3.500V6M3.500 8v2.500H6M12 3.500h2.500V6M14.500 8v2.500H12" stroke="#d8d8d8" strokeWidth="1.200" />
      </S>
    </div>
  );
}

function AppIcon({ gap, dot, children }: { gap: string; dot?: boolean; children: ReactNode }) {
  return (
    <div className={`flex shrink-0 flex-col items-center pt-[14px] ${gap}`}>
      <S w={32} h={32}>{children}</S>
      {dot && <div className="mt-[4px] h-[4px] w-[8px] rounded-full bg-[#9a9a9a]" />}
    </div>
  );
}

function Taskbar() {
  return (
    <div className="flex h-[60px] bg-[#202020] text-white">
      <div className="flex w-[530px] items-center pl-[26px]">
        <S w={30} h={30}>
          <path d="M0 15h6v14H0zM8 20h5v9H8zM16 24h4v5h-4zM23 26h4v3h-4z" fill="#c8391b" />
          <path d="M1.500 2C8 10 15 15 27 15M19 20l8-5-3-8" stroke="#c8391b" strokeWidth="3" />
          <circle cx="22.500" cy="3" r="10" fill="#ff99a4" />
          <text x="15.500" y="7.500" fontSize="12.500" fill="#1c1c1c" textLength="15">9+</text>
        </S>
        <div className="ml-[8px] text-[13.500px] leading-5">
          <T w={39}>NIFTY</T>
          <T w={46} c="text-[#ff99a4]">-0.84%</T>
        </div>
      </div>
      <S w={29} h={29} c="mt-[16px]">
        <defs><linearGradient id="win" x1="0" y1="0" x2="1" y2="1"><stop offset="0" stopColor="#7ce8fb" /><stop offset="1" stopColor="#0a8ff5" /></linearGradient></defs>
        <path d="M1 0h13v14H0V1zM15 0h14v14H15zM0 15h14v14H0zM15 15h14v14H15z" fill="url(#win)" />
      </S>
      <div className="ml-[17px] mt-[10px] flex h-[40px] w-[275px] items-center rounded-full border border-[#505050] bg-[#3c3c3c]">
        <S w={19} h={19} c="ml-[14px]"><circle cx="8" cy="8" r="6.800" stroke="#f0f0f0" strokeWidth="1.900" /><path d="M13 13l5.500 5.500" stroke="#f0f0f0" strokeWidth="2" /></S>
        <T w={52} c="ml-[12px] mt-px text-[15px] text-[#d0d0d0]">Search</T>
        <S w={34} h={32} c="ml-[122px]">
          <path d="M17 6C8 3 0 7 1 14c0 4 2 6 3 8 1 3 0 5 2 7l6-5h10l6 5c2-2 1-4 2-7 1-2 3-4 3-8 1-7-7-11-16-8z" fill="#d92d1c" />
          <circle cx="7" cy="14" r="4" fill="#f47b20" /><circle cx="27" cy="14" r="4" fill="#f47b20" />
          <circle cx="7" cy="14" r="2" fill="#701010" /><circle cx="27" cy="14" r="2" fill="#701010" />
          <path d="M17 0l2 3 4-1-1 4 3 2-4 3-4 2-4-2-4-3 3-2-1-4 4 1z" fill="#f58a3a" />
          <path d="M12 14l5-2 5 2 2 6-3 10-4 2-4-2-3-10z" fill="#19907c" />
          <path d="M14 17l3 4 3-4M12 23l5 4 5-4" stroke="#5ee0b8" strokeWidth="1.500" />
          <path d="M14 14l3-4 3 4-3 3z" fill="#d92d1c" />
        </S>
      </div>
      <AppIcon gap="ml-[13px]">
        <defs><linearGradient id="tv" x1="0" y1="0" x2="1" y2="1"><stop offset="0" stopColor="#fff" /><stop offset="1" stopColor="#d0d0d0" /></linearGradient></defs>
        <rect x="10" y="2" width="22" height="21" rx="1.500" fill="url(#tv)" />
        <rect x="2" y="10" width="22" height="20" rx="1.500" fill="#8a8a8a" fillOpacity=".85" />
      </AppIcon>
      <AppIcon gap="ml-[24px]"><g transform="translate(1.500 .5) scale(.73)"><CopilotMark /></g></AppIcon>
      <AppIcon gap="ml-[23px]">
        <defs><linearGradient id="edge" x1="0" y1="0" x2="1" y2="0"><stop offset="0" stopColor="#1b9de2" /><stop offset="1" stopColor="#52d66b" /></linearGradient></defs>
        <circle cx="16" cy="16" r="15" fill="#0c59a4" />
        <path d="M1 17C1 8 8 1 17 1c9 0 14 6 14 13 0 5-4 7-8 7s-5-2-4-4c2-3 0-7-5-7-6 0-11 3-13 7z" fill="url(#edge)" />
        <path d="M19 17c-1 2 0 4 4 4 3 0 6-1 7-3 0 2-1 3-2 5-4 2-11 2-13-2-2-3-1-6 2-8 2 1 3 3 2 4z" fill="#202020" />
        <path d="M10 14c-4 6 0 14 8 16 5 0 9-3 11-6-7 3-13 1-15-3-1-3 0-6 3-8-2-1-5-1-7 1z" fill="#1277c9" />
        <circle cx="8" cy="24" r="8" fill="#a8a8a8" />
        <circle cx="8" cy="21.500" r="3" fill="#eee" /><path d="M3 29c0-5 10-5 10 0-3 3-7 3-10 0z" fill="#eee" />
      </AppIcon>
      <AppIcon gap="ml-[23px]" dot>
        <path d="M1 5c0-1 1-2 2-2h9l3 4H29c1 0 2 1 2 2v4H1z" fill="#d99a10" />
        <path d="M1 10l12 0 3-2h13c1 0 2 1 2 2v17c0 1-1 2-2 2H3c-1 0-2-1-2-2z" fill="#fdd04c" />
        <path d="M6 25c0-2 1-4 3-4h14c2 0 3 2 3 4v4H6z" fill="#1472c8" /><path d="M10 25h12" stroke="#0a4a8c" strokeWidth="1.500" />
      </AppIcon>
      <AppIcon gap="ml-[23px]">
        <path d="M10 8V2.500h13V8" stroke="#3ab8f0" strokeWidth="2.200" />
        <path d="M2 7h29v21c0 2-1 3-3 3H5c-2 0-3-1-3-3z" fill="#f2f2f2" />
        <path d="M11 13h5.300v5.300H11z" fill="#f25022" /><path d="M17.200 13h5.300v5.300h-5.300z" fill="#7fba00" /><path d="M11 19.200h5.300v5.300H11z" fill="#00a4ef" /><path d="M17.200 19.200h5.300v5.300h-5.300z" fill="#ffb900" />
      </AppIcon>
      <AppIcon gap="ml-[23px]" dot>
        <circle cx="16" cy="16" r="15" fill="#fbc116" />
        <path d="M16 16L3 8.500A15 15 0 0 1 29 8.500H16z" fill="#e33b2e" />
        <path d="M16 16v15A15 15 0 0 1 3 8.500l6.500 11z" fill="#2da44e" />
        <path d="M22.500 19.500L16 31A15 15 0 0 0 29 8.500H16z" fill="#fbc116" />
        <circle cx="16" cy="16" r="7.500" fill="#fff" /><circle cx="16" cy="16" r="5.800" fill="#3f7fe8" />
        <circle cx="26.500" cy="5" r="10" fill="#5c6bc0" />
        <text x="26.500" y="9" fontSize="11" textAnchor="middle" fill="#fff">P</text>
      </AppIcon>
      <AppIcon gap="ml-[23px]">
        <path d="M8 11L20 3l11 8v17c0 1-1 2-2 2H10c-1 0-2-1-2-2z" fill="#1a80d8" />
        <path d="M8 11L20 3l6 4-12 9z" fill="#5ec4f8" /><path d="M14 16l12-9 5 4v5L18 25z" fill="#1058b0" />
        <path d="M31 16v12c0 1-1 2-2 2H13z" fill="#45b8f2" />
        <rect x="1" y="9" width="15" height="15" rx="2" fill="#0f6cbd" />
        <ellipse cx="8.500" cy="16.500" rx="3.500" ry="4" stroke="#fff" strokeWidth="2" />
      </AppIcon>
      <AppIcon gap="ml-[23px]">
        <path d="M3 29.500l2-7A13.500 13.500 0 1 1 10 28z" stroke="#25d366" strokeWidth="2.800" />
        <path d="M10 9c2-2 3-1 4 2 1 2-1 2-1 3 1 2 3 4 5 5 1 0 2-2 3-1 3 1 3 2 2 4-2 2-5 1-8-1-4-3-7-8-5-12z" fill="#25d366" />
        <rect x="9.500" y="-5" width="34" height="20" rx="8" fill="#4cc2ff" />
        <text x="14" y="9.500" fontSize="13.500" fill="#15202a" textLength="25">99+</text>
      </AppIcon>
      <AppIcon gap="ml-[22px]">
        <path d="M14 2h5l7 23H7z" fill="#f28a1c" /><path d="M12.300 8h8.300l1.700 5.500H10.700zM9.300 18h14.400l1.500 5c-4 3-13 3-17.400 0z" fill="#f0f0f0" />
        <path d="M6 23h21l2 7H4z" fill="#f28a1c" /><path d="M8 23c3 4 14 4 17 0z" fill="#fff" />
      </AppIcon>
      <div className="ml-[15px] mt-[5px] flex h-[49px] w-[50px] flex-col items-center rounded-[4px] border border-[#383838] bg-[#2d2d2d]">
        <S w={24} h={30} c="mt-[9px]">
          <path d="M13 1c0-.6.400-1 1-1h9c.6 0 1 .4 1 1v28c0 .6-.4 1-1 1H13z" fill="#d89a12" />
          <path d="M6.500 8c0-.6.400-1 1-1h9c.6 0 1 .4 1 1v22h-11z" fill="#edb92e" />
          <path d="M0 16c0-.6.400-1 1-1h9c.6 0 1 .4 1 1v14H1c-.6 0-1-.4-1-1z" fill="#f8dc6c" />
        </S>
        <div className="mt-[5px] h-[4px] w-[20px] shrink-0 rounded-full bg-[#4cc2ff]" />
      </div>
      <div className="flex h-[60px] items-center text-[14.500px] leading-5">
        <S w={14} h={8} c="ml-[155px]"><path d="M.5 7.500L7 1l6.500 6.500" stroke="#f0f0f0" strokeWidth="1.700" /></S>
        <S w={20} h={13} c="ml-[23px]"><path d="M4 13C-2 12-1 6 4 6c1-7 10-8 12-1z" fill="#9a9a9a" /><path d="M4 13c-4-1-4-4-1-6l4-1c4 1 5 2 7 1 3-2 6 0 6 3s-2 3-3 3z" fill="#f6f6f6" /></S>
        <div className="ml-[23px] flex w-[30px] flex-col items-center"><T w={29}>ENG</T><T w={15}>IN</T></div>
        <S w={20} h={15} c="ml-[22px]"><path d="M.7 5.500c5-6 13.600-6 18.600 0M3.500 8.300c3.500-4 9.500-4 13 0M6.300 11c2-2.300 5.400-2.300 7.400 0" stroke="#f0f0f0" strokeWidth="1.400" /><circle cx="10" cy="13" r="1.600" fill="#f0f0f0" /></S>
        <S w={20} h={16} c="ml-[10px]"><path d="M1 5.500h3l5-4.500v14L4 10.500H1zM12 5c2 1.500 2 4.500 0 6M14.500 2.500c3.500 3 3.500 8 0 11M17 .5c4 4 4 11 0 15" stroke="#f0f0f0" strokeWidth="1.300" /></S>
        <S w={20} h={17} c="ml-[10px]"><rect x="1.500" y="3.500" width="16" height="11.500" rx="2.500" stroke="#f0f0f0" strokeWidth="1.500" /><path d="M6.500 5.500H15c.6 0 1 .4 1 1V12c0 .6-.4 1-1 1H4zM18 7.500h2v4h-2z" fill="#f0f0f0" /><path d="M5-2L0 5h3l-1 5 5-7H4z" fill="#f0f0f0" stroke="#202020" /></S>
        <div className="ml-[20px] flex w-[78px] flex-col items-end"><T w={36}>15:26</T><T w={78}>22-08-2025</T></div>
        <S w={18} h={19} c="ml-[11px]"><path d="M2 13V8C2 3 5 1 8 1s7 2 7 7v5l2 3H0zM5 17h6c0 3-6 3-6 0z" fill="#f4f4f4" /><path d="M5.500 6.500h4l-4 5h4" stroke="#202020" strokeWidth="1.500" /><path d="M12 1h4l-4 4.500h4" stroke="#202020" strokeWidth="3.500" /><path d="M12 1h4l-4 4.500h4" stroke="#f4f4f4" strokeWidth="1.400" /></S>
      </div>
    </div>
  );
}

export default function App() {
  return (
    <div className="h-[1080px] w-[1920px] overflow-hidden bg-[#141414] font-['Open_Sans','Noto_Sans',sans-serif] text-white">
      <TitleBar />
      <MenuBar />
      <Ribbon />
      <div className="flex h-[777px]">
        <Rail />
        <div className="w-[1417px] shrink-0">
          <div className="flex h-[733px]">
            <Canvas />
            <Filters />
          </div>
          <PageTabs />
        </div>
        <Visualizations />
        <DataPane />
      </div>
      <StatusBar />
      <Taskbar />
    </div>
  );
}
